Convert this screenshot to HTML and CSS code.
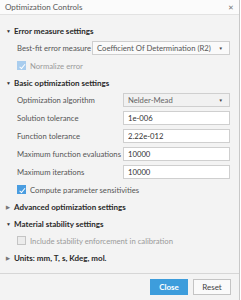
FILE: index.html
```html
<!DOCTYPE html>
<html lang="en">
<head>
    <meta charset="UTF-8">
    <meta name="viewport" content="width=device-width, initial-scale=1.0">
    <title>Optimization Controls</title>
    <link rel="stylesheet" href="styles.css">
</head>
<body>
    <div class="dialog">
        <div class="title-bar">
            <span class="title">Optimization Controls</span>
            <span class="close-x">&#x2715;</span>
        </div>

        <div class="content">
            <div class="section-header"><span class="caret">&#9660;</span>Error measure settings</div>
            <div class="field-row indent">
                <span class="label">Best-fit error measure</span>
                <div class="select wide">Coefficient Of Determination (R2)<span class="arrow">&#9660;</span></div>
            </div>
            <div class="check-row indent disabled">
                <span class="checkbox checked"></span>Normalize error
            </div>

            <div class="section-header"><span class="caret">&#9660;</span>Basic optimization settings</div>
            <div class="field-row indent">
                <span class="label">Optimization algorithm</span>
                <div class="select narrow grey">Nelder-Mead<span class="arrow">&#9660;</span></div>
            </div>
            <div class="field-row indent">
                <span class="label">Solution tolerance</span>
                <input class="text-input" type="text" value="1e-006">
            </div>
            <div class="field-row indent">
                <span class="label">Function tolerance</span>
                <input class="text-input" type="text" value="2.22e-012">
            </div>
            <div class="field-row indent">
                <span class="label">Maximum function evaluations</span>
                <input class="text-input" type="text" value="10000">
            </div>
            <div class="field-row indent">
                <span class="label">Maximum iterations</span>
                <input class="text-input" type="text" value="10000">
            </div>
            <div class="check-row indent">
                <span class="checkbox checked"></span>Compute parameter sensitivities
            </div>

            <div class="section-header"><span class="caret closed">&#9654;</span>Advanced optimization settings</div>

            <div class="section-header"><span class="caret">&#9660;</span>Material stability settings</div>
            <div class="check-row indent disabled">
                <span class="checkbox"></span>Include stability enforcement in calibration
            </div>

            <div class="section-header"><span class="caret closed">&#9654;</span>Units: mm, T, s, Kdeg, mol.</div>
        </div>

        <div class="footer">
            <button class="btn primary">Close</button>
            <button class="btn">Reset</button>
        </div>
    </div>
</body>
</html>
```

FILE: styles.css
```css
body {
    margin: 0;
    padding: 0;
    background-color: #ffffff;
    font-family: Lato, "Open Sans", sans-serif;
    font-size: 7.7px;
    color: #555;
}

.dialog {
    width: 239px;
    height: 300px;
    border-right: 1px solid #c8c8c8;
    background-color: #f3f3f3;
    display: flex;
    flex-direction: column;
}

.title-bar {
    height: 14px;
    background-color: #fbfbfb;
    border-bottom: 1px solid #e2e2e2;
    display: flex;
    align-items: center;
    justify-content: space-between;
    padding: 0 5px;
}

.title {
    color: #5a5a5a;
    font-size: 8px;
}

.close-x {
    color: #777;
    font-size: 7px;
}

.content {
    flex: 1;
    padding-top: 7px;
}

.section-header {
    height: 17px;
    display: flex;
    align-items: center;
    padding-left: 6px;
    font-weight: bold;
    font-size: 8px;
    color: #2a2a2a;
    white-space: nowrap;
}

.caret {
    font-size: 5px;
    width: 8px;
    color: #333;
}

.caret.closed {
    color: #777;
}

.indent {
    padding-left: 17px;
    padding-right: 9px;
}

.field-row {
    height: 18px;
    display: flex;
    align-items: center;
}

.label {
    flex: 1;
    color: #555;
    white-space: nowrap;
}

.select {
    height: 14px;
    box-sizing: border-box;
    border: 1px solid #cfcfcf;
    background-color: #fafafa;
    display: flex;
    align-items: center;
    justify-content: space-between;
    padding: 0 6px 0 4px;
    color: #555;
    flex-shrink: 0;
    white-space: nowrap;
}

.select.wide {
    width: 138px;
}

.select.narrow {
    width: 107px;
}

.select.grey {
    background-color: #f1f1f1;
    color: #666;
}

.arrow {
    font-size: 4.5px;
    color: #444;
}

.text-input {
    width: 107px;
    height: 14px;
    box-sizing: border-box;
    border: 1px solid #cfcfcf;
    background-color: #ffffff;
    padding: 0 4px;
    font-family: inherit;
    font-size: 7.7px;
    color: #333;
    margin: 0;
    flex-shrink: 0;
}

.check-row {
    height: 17px;
    display: flex;
    align-items: center;
    color: #555;
    white-space: nowrap;
}

.check-row.disabled {
    color: #9a9a9a;
}

.checkbox {
    width: 9px;
    height: 9px;
    box-sizing: border-box;
    border: 1px solid #c4c4c4;
    background-color: #ececec;
    margin-right: 4px;
    position: relative;
}

.checkbox.checked {
    background-color: #4a9de0;
    border-color: #4a9de0;
}

.checkbox.checked::after {
    content: "";
    position: absolute;
    left: 2.5px;
    top: 0.5px;
    width: 2px;
    height: 4.5px;
    border: solid #fff;
    border-width: 0 1.2px 1.2px 0;
    transform: rotate(40deg);
}

.disabled .checkbox.checked {
    background-color: #a9cdee;
    border-color: #a9cdee;
}

.footer {
    height: 26px;
    border-top: 1px solid #d6d6d6;
    display: flex;
    align-items: center;
    justify-content: flex-end;
    gap: 5px;
    padding-right: 8px;
}

.btn {
    width: 38px;
    height: 16px;
    border: 1px solid #c4c4c4;
    background-color: #fafafa;
    font-family: inherit;
    font-size: 8px;
    color: #444;
    padding: 0;
}

.btn.primary {
    background-color: #3d9ddc;
    border-color: #3d9ddc;
    color: #fff;
    font-weight: bold;
}
```
